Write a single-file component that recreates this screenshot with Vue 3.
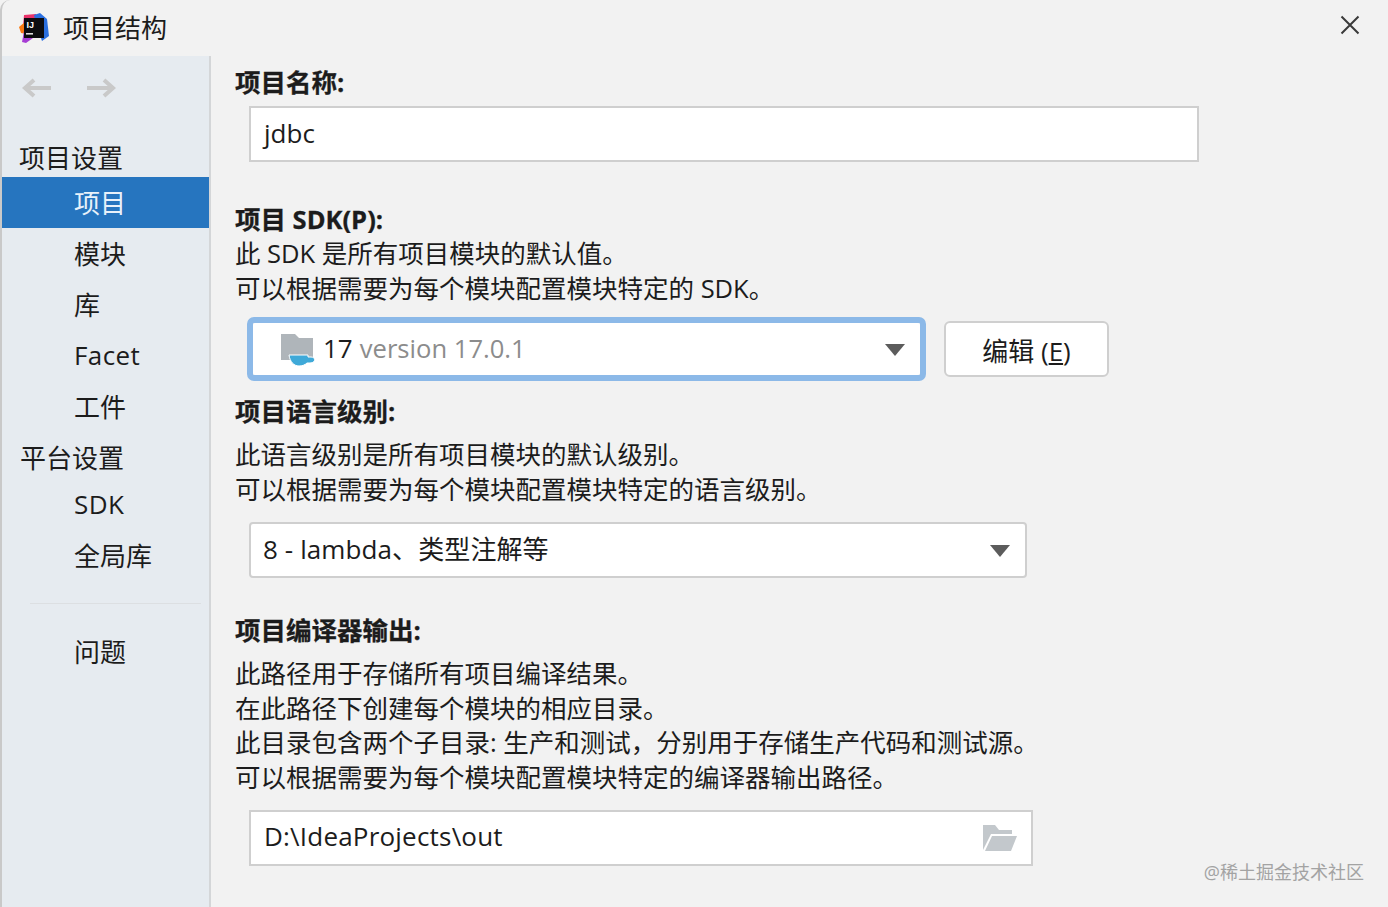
<script setup>
const items = [{ t: '模块' }, { t: '库' }, { t: 'Facet', lat: true }, { t: '工件' }]
const items2 = [{ t: 'SDK', lat: true }, { t: '全局库' }]
</script>

<template>
  <div class="win">
    <header class="title">
      <svg class="logo" width="32" height="32" viewBox="0 0 32 32">
        <path d="M6 3 L18 2 L23 10 L12 18 L5 14Z" fill="#e8336b" />
        <path d="M1 15 L7 10 L9 22 L3 21Z" fill="#f97a12" />
        <path d="M4 30 L6 19 L15 26 L8 31Z" fill="#a63dd4" />
        <path d="M16 3 L22 1 L29 7 L31 24 L24 29 L18 12Z" fill="#2a6fe0" />
        <rect x="6" y="6" width="20" height="20" fill="#0c0c10" />
        <text x="8.5" y="15.5" class="logo-t">IJ</text>
        <rect x="8" y="21" width="7" height="1.6" fill="#ddd" />
      </svg>
      <span class="title-text">项目结构</span>
      <svg class="close" width="20" height="20" viewBox="0 0 20 20">
        <path d="M1.5 1.5 L18.5 18.5 M18.5 1.5 L1.5 18.5" stroke="#3a3a3a" stroke-width="2" fill="none" />
      </svg>
    </header>
    <div class="body">
      <aside class="side">
        <div class="nav">
          <svg width="32" height="22" viewBox="0 0 32 22">
            <path d="M30 11H4 M13 3 L4 11 L13 19" stroke="#c9c9c9" stroke-width="4" fill="none" />
          </svg>
          <svg width="32" height="22" viewBox="0 0 32 22">
            <path d="M2 11H28 M19 3 L28 11 L19 19" stroke="#c9c9c9" stroke-width="4" fill="none" />
          </svg>
        </div>
        <div class="group g1">项目设置</div>
        <div class="row sel">项目</div>
        <div v-for="i in items" :key="i.t" class="row" :class="{ lat: i.lat }">{{ i.t }}</div>
        <div class="group g2">平台设置</div>
        <div v-for="i in items2" :key="i.t" class="row" :class="{ lat: i.lat }">{{ i.t }}</div>
        <div class="sep"></div>
        <div class="row">问题</div>
      </aside>
      <main class="main">
        <h3 class="h h1">项目名称:</h3>
        <div class="field f1">jdbc</div>

        <h3 class="h h2">项目 SDK(P):</h3>
        <p class="d d2">此 SDK 是所有项目模块的默认值。</p>
        <p class="d">可以根据需要为每个模块配置模块特定的 SDK。</p>
        <div class="sdk-row">
          <div class="focus">
            <div class="combo c1">
              <svg class="jdk" width="35" height="32" viewBox="0 0 35 32">
                <path d="M0 0H14L18 4H32V26H0Z" fill="#afb5ba" />
                <path d="M8 21H27V23H30C35 23 35 29 29 29H26C24 31 21 32 18 32C13 32 9 28 8 21Z" fill="#3fa9d8" stroke="#fff" stroke-width="1" />
              </svg>
              <span class="v">17</span>
              <span class="ver">version 17.0.1</span>
              <i class="tri"></i>
            </div>
          </div>
          <button class="btn">编辑 (<u>E</u>)</button>
        </div>

        <h3 class="h h3">项目语言级别:</h3>
        <p class="d d3">此语言级别是所有项目模块的默认级别。</p>
        <p class="d">可以根据需要为每个模块配置模块特定的语言级别。</p>
        <div class="combo c2">
          <span class="v">8 - lambda、类型注解等</span>
          <i class="tri"></i>
        </div>

        <h3 class="h h4">项目编译器输出:</h3>
        <p class="d d4">此路径用于存储所有项目编译结果。</p>
        <p class="d">在此路径下创建每个模块的相应目录。</p>
        <p class="d">此目录包含两个子目录: 生产和测试，分别用于存储生产代码和测试源。</p>
        <p class="d">可以根据需要为每个模块配置模块特定的编译器输出路径。</p>
        <div class="field f3">
          <span class="path">D:\IdeaProjects\out</span>
          <svg width="36" height="28" viewBox="0 0 36 28">
            <path d="M1 1H13L17 6H30V10H9L1 26Z" fill="#c3c8cc" />
            <path d="M10 12H35L29 27H3Z" fill="#c3c8cc" />
          </svg>
        </div>
      </main>
    </div>
    <div class="mark">@稀土掘金技术社区</div>
  </div>
</template>

<style>
html, body { margin: 0; background: #f2f2f2; }
</style>

<style scoped>
.win {
  position: relative;
  width: 1388px;
  height: 907px;
  overflow: hidden;
  background: #f2f2f2;
  border-left: 2px solid #c9c9c9;
  border-top-left-radius: 10px;
  box-sizing: border-box;
  font-family: "Open Sans", "Noto Sans CJK SC", sans-serif;
  color: #1c1c1c;
}
.title {
  height: 56px;
  display: flex;
  align-items: center;
  padding-left: 16px;
  padding-right: 28px;
}
.logo { flex: none; }
.logo-t { font: bold 9px "Liberation Sans", sans-serif; fill: #fff; }
.title-text { margin-left: 13px; font-size: 26px; line-height: 56px; }
.close { margin-left: auto; margin-bottom: 6px; }
.body { display: flex; height: 851px; }
.side {
  width: 209px;
  flex: none;
  box-sizing: border-box;
  background: #e6ebf0;
  border-right: 2px solid #d4d6d8;
}
.nav {
  height: 64px;
  display: flex;
  align-items: center;
  gap: 32px;
  padding-left: 19px;
  box-sizing: border-box;
}
.group { font-size: 26px; line-height: 36px; padding-left: 17px; height: 36px; }
.g1 { margin-top: 20px; margin-bottom: 1px; }
.g2 { height: 46px; line-height: 50px; padding-left: 18px; margin-top: 1px; }
.row {
  height: 51px;
  line-height: 53px;
  padding-left: 72px;
  font-size: 26px;
}
.lat { line-height: 51px; letter-spacing: 0.4px; }
.sel { background: #2675bf; color: #e8f1fa; }
.sep { height: 1px; background: #dcdfe2; margin: 22px 8px 22px 28px; }
.main { flex: 1; padding-left: 24px; min-width: 0; }
.h { margin: 0; font-size: 25.5px; font-weight: 700; line-height: 36px; -webkit-text-stroke: 0.3px #1c1c1c; }
.h1 { margin-top: 8px; }
.h2 { margin-top: 39px; }
.h3 { margin-top: 12px; }
.h4 { margin-top: 34px; }
.d { margin: 0; font-size: 25.5px; line-height: 34.7px; }
.d2 { margin-top: -1px; }
.d3 { margin-top: 8px; }
.d4 { margin-top: 8px; }
.field {
  box-sizing: border-box;
  background: #fff;
  border: 2px solid #cfcfcf;
  font-size: 26px;
  display: flex;
  align-items: center;
  justify-content: space-between;
}
.f1 { width: 950px; height: 56px; margin: 6px 0 0 14px; padding: 0 0 3px 13px; }
.f3 { width: 784px; height: 56px; margin: 15px 0 0 14px; padding: 0 13px 0 13px; }
.path { letter-spacing: 0.2px; padding-bottom: 3px; }
.sdk-row { display: flex; align-items: center; margin: 12px 0 0 12px; }
.focus {
  width: 679px;
  height: 64px;
  box-sizing: border-box;
  border: 6px solid #8cb9e8;
  border-radius: 7px;
}
.combo {
  position: relative;
  box-sizing: border-box;
  background: #fff;
  display: flex;
  align-items: center;
  font-size: 26px;
}
.c1 { height: 52px; border-radius: 3px; padding-left: 28px; }
.c2 {
  width: 778px;
  height: 56px;
  margin: 15px 0 0 14px;
  padding-left: 12px;
  border: 2px solid #cfcfcf;
  border-radius: 4px;
}
.v { position: relative; top: -1px; }
.c2 .v { top: -2px; letter-spacing: 0.1px; }
.jdk { flex: none; margin-right: 7px; margin-top: 2px; }
.ver { color: #8c8c8c; margin-left: 7px; font-size: 25.6px; position: relative; top: -1px; }
.tri {
  position: absolute;
  right: 15px;
  top: 50%;
  margin-top: -5px;
  border-left: 10px solid transparent;
  border-right: 10px solid transparent;
  border-top: 12px solid #5c5c5c;
}
.btn {
  margin-left: 18px;
  width: 165px;
  height: 56px;
  box-sizing: border-box;
  background: #fff;
  border: 2px solid #cfcfcf;
  border-radius: 6px;
  font: inherit;
  font-size: 26px;
  color: #1c1c1c;
  padding: 2px 0 0;
}
.mark {
  position: absolute;
  right: 24px;
  top: 860px;
  font-size: 18px;
  line-height: 24px;
  color: #a3a3a3;
}
</style>
